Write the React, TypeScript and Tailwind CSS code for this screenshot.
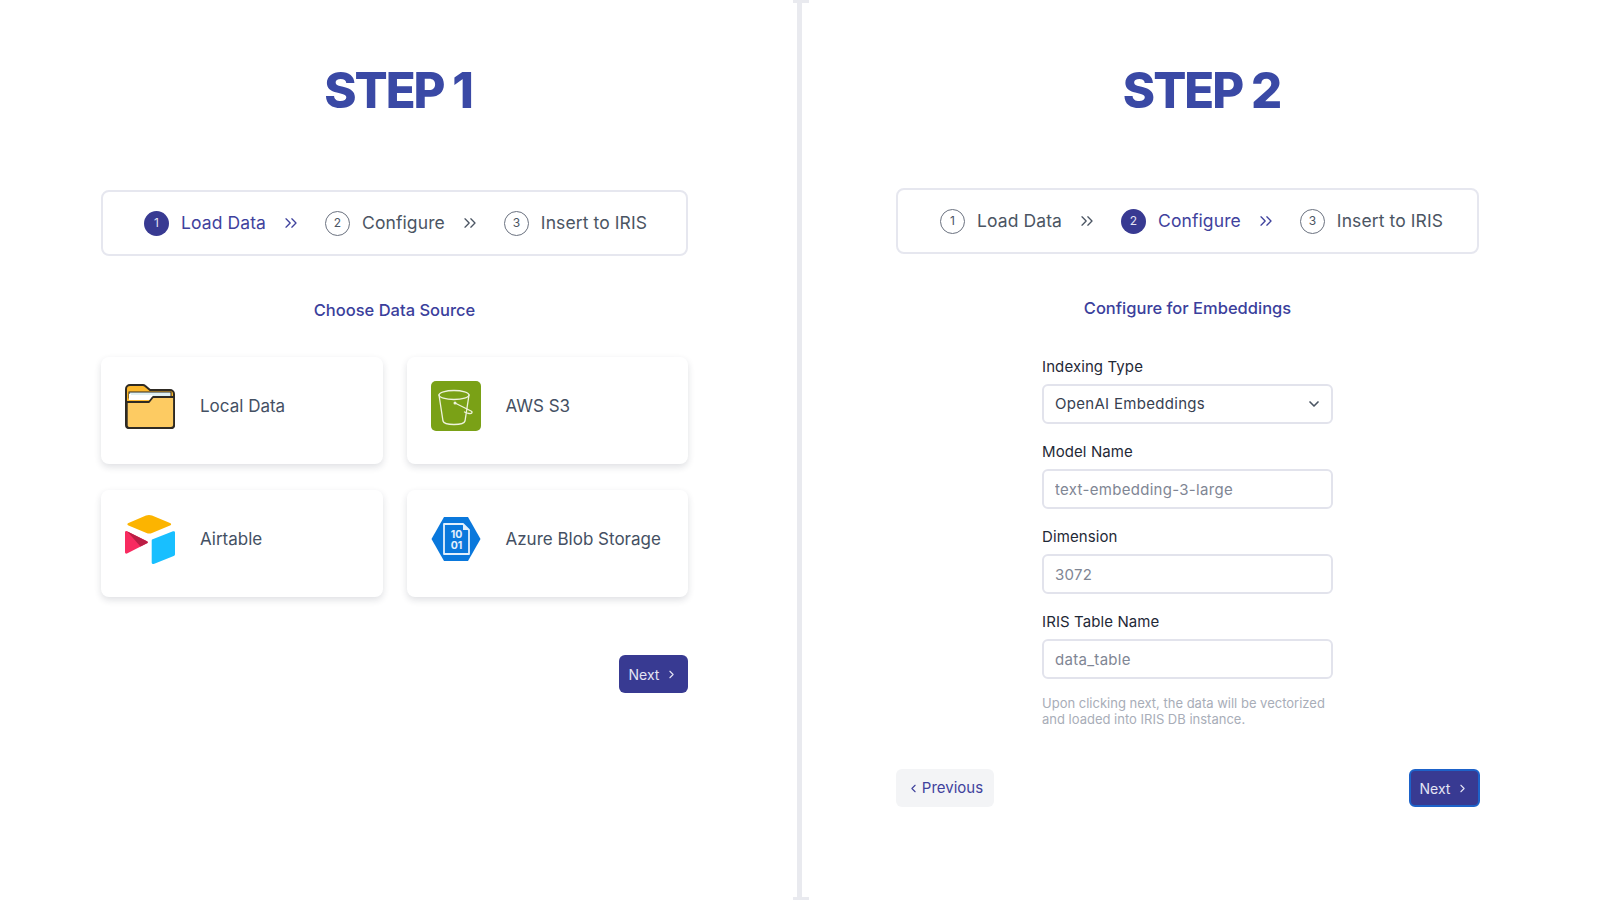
import React from 'react';
import { ChevronDown, ChevronLeft, ChevronRight, ChevronsRight } from 'lucide-react';

const FolderIcon = () => (
  <svg viewBox="0 0 50 46" className="w-[50px] h-[46px]">
    <path d="M1 6a4 4 0 0 1 4-4h13a3 3 0 0 1 2 .8L25 7h20a4 4 0 0 1 4 4v31a3 3 0 0 1-3 3H4a3 3 0 0 1-3-3z" fill="#fbb72c" stroke="#2e2a23" strokeWidth="2" />
    <rect x="4" y="9" width="42" height="6" fill="#dff0f3" stroke="#2e2a23" strokeWidth="1" />
    <path d="M4 11h2v1h22l-3 5H4z" fill="#fff" />
    <path d="M1.800 19H24l4-5h21v28a3 3 0 0 1-3 3H4a2.400 2.400 0 0 1-2.200-2.400z" fill="#fdcb62" stroke="#2e2a23" strokeWidth="1.800" strokeLinejoin="round" />
  </svg>
);

const BucketIcon = () => (
  <svg viewBox="0 0 50 50" className="w-[50px] h-[50px]">
    <rect width="50" height="50" rx="5" fill="#7aa116" />
    <g fill="none" stroke="#eef3dc" strokeWidth="1.300" strokeLinecap="round">
      <ellipse cx="23" cy="14" rx="15" ry="4.500" />
      <path d="M8 14l4 26c.5 2 5 3.500 11 3.500s10.500-1.500 11-3.500l4-26" />
      <path d="M24 22l16 8c2 1 1 3-2 2.500-1.500-.2-3-.8-4.500-1.500" />
    </g>
    <circle cx="24" cy="22" r="1.500" fill="#eef3dc" />
  </svg>
);

const AirtableIcon = () => (
  <svg viewBox="0 0 50 50" className="w-[50px] h-[50px]">
    <path d="M21 1.500a8 8 0 0 1 6 0l18 7.500c1.500.6 1.500 2 0 2.600L27 19a8 8 0 0 1-5.500 0L3.500 11.600c-1.500-.6-1.500-2 0-2.600z" fill="#fcb400" />
    <path d="M27 25.500l21-8.200c1-.4 2 .2 2 1.200v21.500c0 1-.5 1.600-1.300 2l-20 7.900c-1 .4-2-.2-2-1.300V27c0-.7.100-1.200.3-1.500z" fill="#18bfff" />
    <path d="M0 18.500c0-1.200 1-1.800 2-1.300l20 10c1 .5 1 1.600 0 2.100L2 39.500c-1 .5-2-.2-2-1.300z" fill="#f82b60" />
    <path d="M2 17.200l20 10c1 .5 1 1.600 0 2.100l-6.500 3.300L2 17.200z" fill="#ba1e45" />
  </svg>
);

const AzureIcon = () => (
  <svg viewBox="0 0 50 46" className="w-[50px] h-[46px]">
    <path d="M13 1h24l12.500 22L37 45H13L.5 23z" fill="#0a78dc" />
    <path d="M13 8h19l6 6v24H13z" fill="none" stroke="#e3f0fc" strokeWidth="1.800" strokeLinejoin="round" />
    <path d="M32 8v6h6" fill="#e3f0fc" />
    <text x="25.500" y="22" textAnchor="middle" fontSize="10.500" fontWeight="700" fill="#e3f0fc" fontFamily="Inter, sans-serif">10</text>
    <text x="25.500" y="33" textAnchor="middle" fontSize="10.500" fontWeight="700" fill="#e3f0fc" fontFamily="Inter, sans-serif">01</text>
  </svg>
);

const steps = ['Load Data', 'Configure', 'Insert to IRIS'];

const Stepper = ({ active }: { active: number }) => (
  <div className={`flex items-center h-[66px] w-full border-2 border-[#e6e7ef] rounded-lg text-[17.5px] ${active === 1 ? 'pl-[42px]' : 'pl-[41px]'}`}>
    {steps.map((label, i) => {
      const on = i === active;
      return (
        <React.Fragment key={label}>
          <div
            className={`w-[25px] h-[25px] rounded-full flex items-center justify-center text-xs ${
              on ? 'bg-[#383a92] text-[#e4e4f4]' : 'border border-[#6b7280] text-[#4b5563]'
            }`}
          >
            {i + 1}
          </div>
          <span className={`ml-3 tracking-[0.1px] ${on ? 'text-[#3f429d]' : 'text-[#4b5563]'}`}>{label}</span>
          {i < 2 && (
            <ChevronsRight
              strokeWidth={1.6}
              className={`w-[20px] h-[20px] ml-[15px] mr-[24px] ${on ? 'text-[#3f429d]' : 'text-[#4b5563]'}`}
            />
          )}
        </React.Fragment>
      );
    })}
  </div>
);

const SourceCard = ({ icon, label }: { icon: React.ReactNode; label: string }) => (
  <div className="h-[107px] rounded-lg bg-white shadow-[0_3px_7px_rgba(30,35,60,0.14)] flex pl-[24px] pt-[24px]">
    <div className="w-[50px] h-[50px] flex items-center justify-center">{icon}</div>
    <span className="ml-[25px] mt-[13px] text-[17px] text-[#445063] h-[26px]">{label}</span>
  </div>
);

const Field = ({ label, value }: { label: string; value: string }) => (
  <div className="mb-[17px]">
    <label className="block h-[22px] mb-[6px] text-[15px] leading-[22px] tracking-[0.1px] text-[#1f2937]">{label}</label>
    <input
      readOnly
      placeholder={value}
      className="block w-full h-[40px] px-[11px] text-[15px] tracking-[0.3px] rounded-md border-2 border-[#e2e3ec] placeholder:text-[#7f8694] outline-none"
    />
  </div>
);

const NextButton = ({ outlined }: { outlined?: boolean }) => (
  <button
    className={`h-[38px] rounded-md bg-[#383a92] text-[#e4e4f4] text-[14px] flex items-center justify-center gap-1.5 ${
      outlined ? 'w-[71px] -mr-[1px] border-2 border-[#1d62c9]' : 'w-[69px]'
    }`}
  >
    Next
    <ChevronRight className="w-[13px] h-[13px]" />
  </button>
);

export default function App() {
  return (
    <div className="flex h-[900px] bg-white font-['Inter','Noto_Sans',sans-serif] overflow-hidden">
      {/* Step 1 */}
      <div className="w-[797px] shrink-0 pl-[101px] pr-[109px]">
        <h1 className="mt-[58px] h-[66px] text-center pl-[7px] text-[49px] leading-[66px] font-extrabold tracking-[-2px] text-[#3a49a5]">
          STEP 1
        </h1>
        <div className="mt-[66px]">
          <Stepper active={0} />
        </div>
        <h2 className="mt-[42px] h-[24px] text-center text-[16.5px] leading-[24px] font-medium text-[#3b3f9c]">
          Choose Data Source
        </h2>
        <div className="mt-[35px] grid grid-cols-2 gap-x-[24px] gap-y-[26px]">
          <SourceCard icon={<FolderIcon />} label="Local Data" />
          <SourceCard icon={<BucketIcon />} label="AWS S3" />
          <SourceCard icon={<AirtableIcon />} label="Airtable" />
          <SourceCard icon={<AzureIcon />} label="Azure Blob Storage" />
        </div>
        <div className="mt-[58px] flex justify-end">
          <NextButton />
        </div>
      </div>

      {/* Divider */}
      <div className="relative w-[5px] shrink-0 bg-[#e9eaef]">
        <div className="absolute top-0 -left-[4px] w-[16px] h-[3px] bg-[#e9eaef]" />
        <div className="absolute bottom-0 -left-[4px] w-[16px] h-[3px] bg-[#e9eaef]" />
      </div>

      {/* Step 2 */}
      <div className="flex-1 pl-[94px] pr-[121px]">
        <h1 className="mt-[58px] h-[66px] text-center pl-[28px] text-[49px] leading-[66px] font-extrabold tracking-[-2px] text-[#3a49a5]">
          STEP 2
        </h1>
        <div className="mt-[64px]">
          <Stepper active={1} />
        </div>
        <h2 className="mt-[42px] h-[24px] text-center text-[16.5px] leading-[24px] font-medium text-[#3b3f9c]">
          Configure for Embeddings
        </h2>
        <div className="mt-[36px] w-[291px] mx-auto">
          <div className="mb-[17px]">
            <label className="block h-[22px] mb-[6px] text-[15px] leading-[22px] tracking-[0.1px] text-[#1f2937]">
              Indexing Type
            </label>
            <div className="relative">
              <select className="block w-full h-[40px] px-[11px] text-[15px] tracking-[0.3px] text-[#374151] rounded-md border-2 border-[#e2e3ec] bg-white appearance-none outline-none">
                <option>OpenAI Embeddings</option>
              </select>
              <ChevronDown strokeWidth={2.5} className="absolute right-[11px] top-[12px] w-4 h-4 text-[#4b5563]" />
            </div>
          </div>
          <Field label="Model Name" value="text-embedding-3-large" />
          <Field label="Dimension" value="3072" />
          <Field label="IRIS Table Name" value="data_table" />
          <p className="-mt-[1px] text-[13px] leading-[16px] text-[#a8adb8]">
            Upon clicking next, the data will be vectorized and loaded into IRIS DB instance.
          </p>
        </div>
        <div className="mt-[42px] flex justify-between items-center">
          <button className="w-[98px] h-[38px] rounded-md bg-[#f3f4f6] text-[#3f429d] text-[15px] flex items-center justify-center gap-0.5">
            <ChevronLeft className="w-[13px] h-[13px]" />
            Previous
          </button>
          <NextButton outlined />
        </div>
      </div>
    </div>
  );
}
